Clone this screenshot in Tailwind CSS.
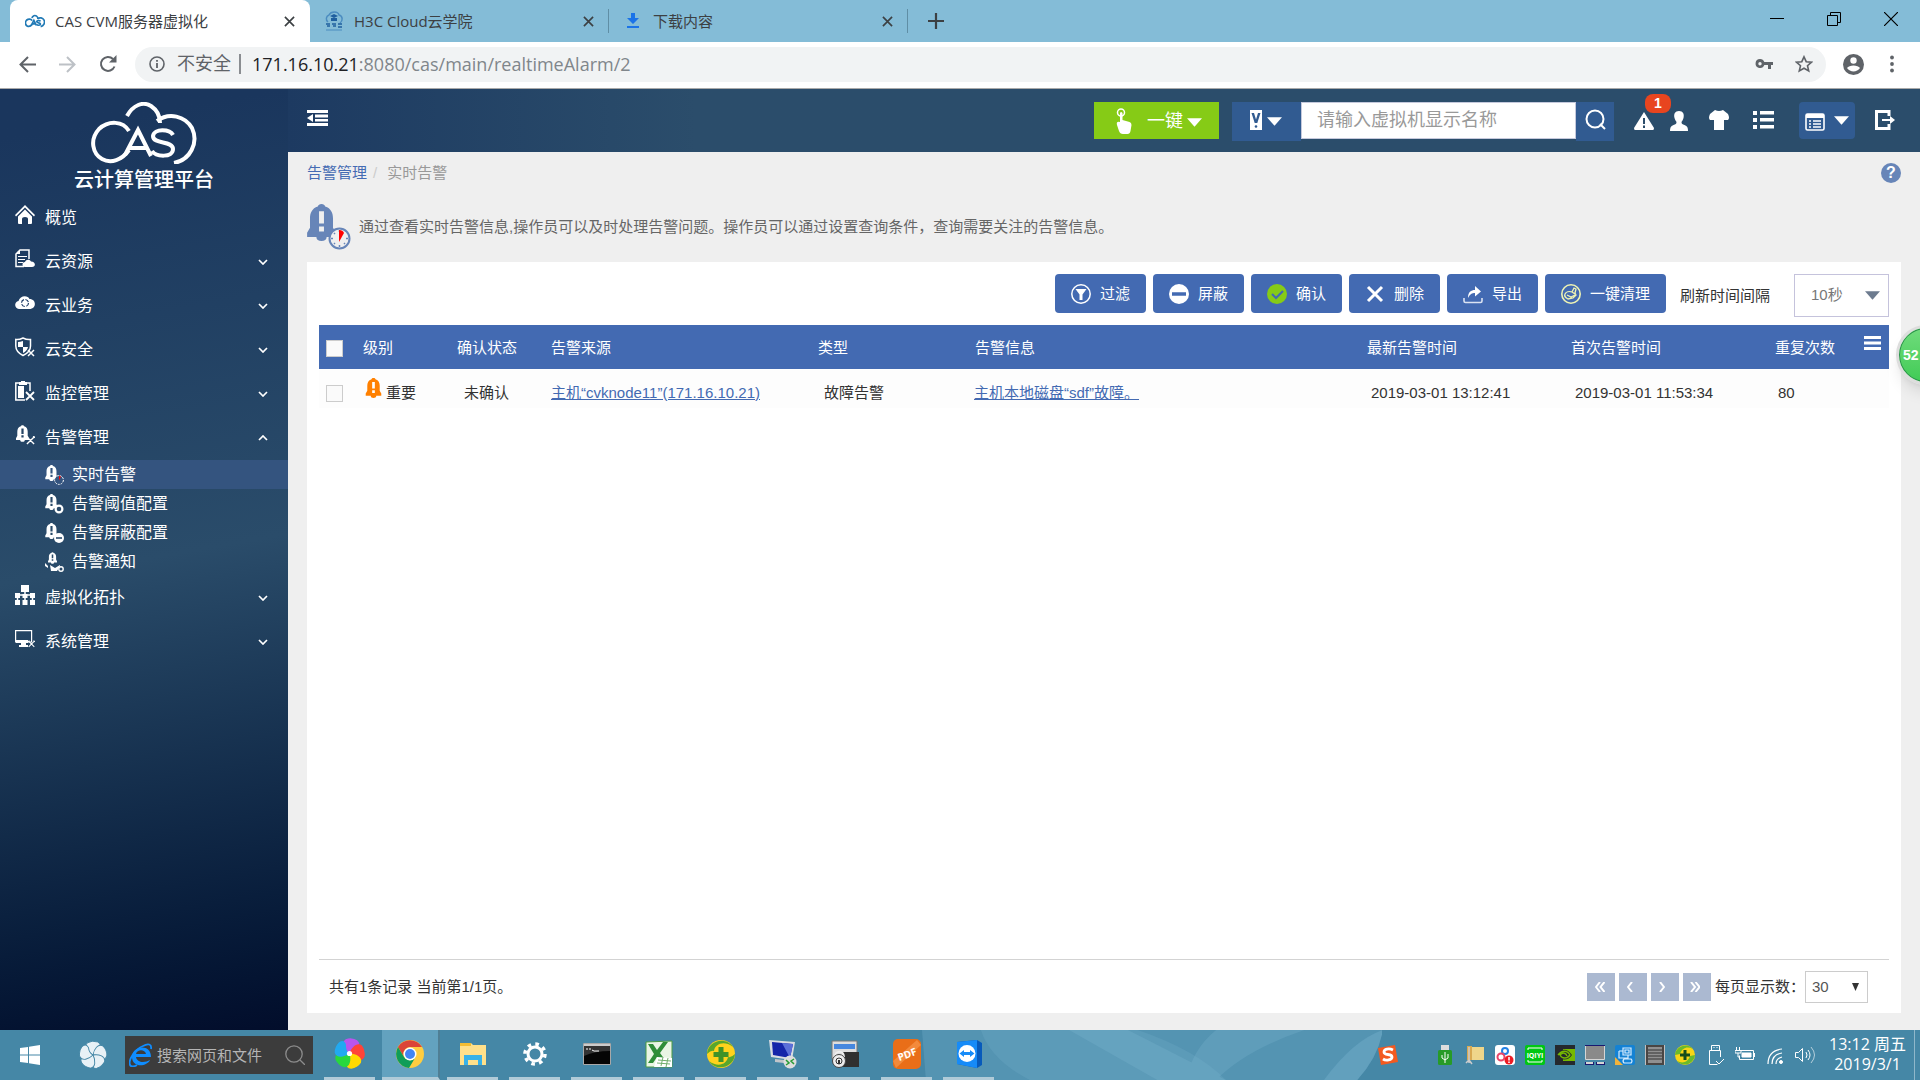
<!DOCTYPE html>
<html lang="zh-CN">
<head>
    <meta charset="UTF-8">
    <meta name="viewport" content="width=device-width, initial-scale=1.0">
    <title>CAS CVM服务器虚拟化</title>
    <script src="https://cdn.jsdelivr.net/npm/@tailwindcss/browser@4"></script>
</head>
<body class="relative flex h-screen flex-col overflow-hidden bg-[#efefef] font-['Liberation_Sans','Noto_Sans_CJK_SC',sans-serif] text-[15px] text-[#333]">
    <!-- 公用图标 -->
    <svg class="hidden">
        <symbol id="chevron" viewBox="0 0 10 6"><path d="M1 1l4 4 4-4" fill="none" stroke="currentColor" stroke-width="1.7"/></symbol>
        <symbol id="close" viewBox="0 0 12 12"><path d="M1 1l10 10M11 1L1 11" fill="none" stroke="currentColor" stroke-width="1.8"/></symbol>
        <symbol id="triangle" viewBox="0 0 16 9"><path d="M0 0h16L8 9z" fill="currentColor"/></symbol>
        <symbol id="bell" viewBox="0 0 14 18"><path fill="currentColor" fill-rule="evenodd" d="M7 0c1 0 1.600.5 1.800 1.200C11.600 2 12.600 4.500 12.600 7v4.500L14 14v2H9.500c0 1.300-1 2-2.500 2s-2.500-.7-2.500-2H0v-2l1.400-2.500V7c0-2.500 1-5 3.800-5.800C5.400.5 6 0 7 0zM5.800 3.500v6h2.400v-6zM5.800 11v2.400h2.400V11z"/></symbol>
        <symbol id="tools" viewBox="0 0 10 10"><path d="M1 1l8 8M9 1L1 9M0 2l2-2M8 0l2 2" fill="none" stroke="currentColor" stroke-width="1.500"/></symbol>
        <symbol id="cas" viewBox="0 0 106 62">
            <g fill="none" stroke="currentColor">
                <path d="M38 29C32 19 18 18 8 27-2 38 2 52 11 57c9 5 20 1 27-9"/>
                <path d="M36 14C42 3 52-1 60 4c6 4 9 10 9 17"/>
                <path d="M66 19c12-9 28-5 35 7 7 15-2 32-18 35"/>
                <path d="M34 53l13-25 13 26M39 46h17"/>
                <path d="M82 33c-3-6-19-7-20 1 0 9 20 4 20 13 0 9-17 8-21 2"/>
            </g>
        </symbol>
        <symbol id="petal" viewBox="0 0 30 30"><path d="M15 15C9 12 5 6 9 2q5-3 11-1 5 3 1 7-5 2-6 7z" fill="currentColor"/></symbol>
    </svg>

    <!-- 浏览器标签栏 -->
    <div class="flex h-[42px] shrink-0 items-center bg-[#84bcd7] pl-[10px] font-['Open_Sans','Noto_Sans_CJK_SC',sans-serif] text-[15px] text-[#3c4043]">
        <div class="flex h-full w-[300px] items-center rounded-t-lg bg-white pr-[15px] pl-[15px]">
            <svg class="h-4 w-5 stroke-[9] text-[#2079b5]"><use href="#cas"/></svg>
            <span class="ml-[10px] flex-1">CAS CVM服务器虚拟化</span>
            <button aria-label="关闭标签"><svg class="size-[11px]"><use href="#close"/></svg></button>
        </div>
        <div class="flex h-6 w-[299px] items-center border-r border-[#5f8ea5] pr-[14px] pl-[14px]">
            <svg class="size-5" viewBox="0 0 20 20"><path d="M4 11a4 4 0 0 1 1-7c2-4 9-4 10 0 4 1 4 6 1 8" fill="none" stroke="#4b8cc0" stroke-width="1.500"/><path d="M6 5l4-2 4 2-4 2zM7 7v3h6V7" fill="#1f5f9f"/><path d="M2 13h4M3 15h3M8 13h4M9 15h3M14 13h4M14 16h4" stroke="#1f5f9f" stroke-width="1.500"/><path d="M2 19h16" stroke="#4b8cc0"/></svg>
            <span class="ml-[10px] flex-1">H3C Cloud云学院</span>
            <button aria-label="关闭标签"><svg class="size-[11px]"><use href="#close"/></svg></button>
        </div>
        <div class="flex h-6 w-[299px] items-center border-r border-[#5f8ea5] pr-[14px] pl-[18px]">
            <svg class="h-4 w-3" viewBox="0 0 12 16" fill="#1a73e8"><path d="M4 0h4v5h4l-6 6-6-6h4zM0 13h12v2H0z"/></svg>
            <span class="ml-[14px] flex-1">下载内容</span>
            <button aria-label="关闭标签"><svg class="size-[11px]"><use href="#close"/></svg></button>
        </div>
        <button class="ml-5" aria-label="新建标签"><svg class="size-4" viewBox="0 0 16 16"><path d="M8 0v16M0 8h16" stroke="#3c4043" stroke-width="2.200"/></svg></button>
        <div class="ml-auto flex h-full items-center gap-[43px] pr-[22px] pb-[5px] text-black">
            <button aria-label="最小化"><svg class="size-[14px]" viewBox="0 0 14 14"><path d="M0 6.500h14" stroke="currentColor"/></svg></button>
            <button aria-label="还原"><svg class="size-[14px]" viewBox="0 0 14 14" fill="none" stroke="currentColor"><path d="M.5 3.500h10v10H.5zM3.500 3V.5h10v10H11"/></svg></button>
            <button aria-label="关闭"><svg class="size-[14px]" viewBox="0 0 14 14"><path d="M0 0l14 14M14 0L0 14" stroke="currentColor" stroke-width="1.200"/></svg></button>
        </div>
    </div>

    <!-- 地址栏 -->
    <div class="flex h-[47px] shrink-0 items-center border-b border-[#a9a9a9] bg-white pr-[26px] pb-[2px] pl-[19px] text-[#5f6368]">
        <button aria-label="后退"><svg class="size-[17px]" viewBox="0 0 17 17" fill="none" stroke="currentColor" stroke-width="2"><path d="M17 8.500H2M9 1L1.500 8.500 9 16"/></svg></button>
        <button class="ml-[23px] text-[#bdc1c6]" aria-label="前进"><svg class="size-[17px]" viewBox="0 0 17 17" fill="none" stroke="currentColor" stroke-width="2"><path d="M0 8.500h15M8 1l7.500 7.500L8 16"/></svg></button>
        <button class="ml-[23px]" aria-label="刷新"><svg class="size-[18px]" viewBox="0 0 18 18"><path d="M15.500 11.500A7 7 0 1 1 14 4" fill="none" stroke="currentColor" stroke-width="2"/><path d="M17.500 0v7.500H10z" fill="currentColor"/></svg></button>
        <div class="ml-[18px] flex h-[35px] flex-1 items-center rounded-full bg-[#f1f3f4] pr-[13px] pl-[14px]">
            <svg class="size-4" viewBox="0 0 16 16"><circle cx="8" cy="8" r="7" fill="none" stroke="currentColor" stroke-width="1.600"/><path d="M8 7v5M8 4v1.800" stroke="currentColor" stroke-width="1.800"/></svg>
            <span class="ml-3 border-r-2 border-[#8a8d91] pr-2 text-lg leading-5">不安全</span>
            <span class="ml-[11px] flex-1 font-['Open_Sans',sans-serif] text-lg text-[#80868b]"><span class="text-[#202124]">171.16.10.21</span>:8080/cas/main/realtimeAlarm/2</span>
            <svg class="h-3 w-[18px]" viewBox="0 0 18 12"><path fill="currentColor" fill-rule="evenodd" d="M5 1a4.500 4.500 0 0 1 4.300 3H18v3h-2v4h-3V7H9.300A4.500 4.500 0 1 1 5 1zm0 3a1.700 1.700 0 1 0 0 3.400A1.700 1.700 0 0 0 5 4z"/></svg>
            <svg class="ml-[22px] size-[18px]" viewBox="0 0 18 18"><path d="M9 1.800l2.200 4.900 5.300.5-4 3.500 1.200 5.200L9 13.200l-4.700 2.700 1.200-5.200-4-3.500 5.300-.5z" fill="none" stroke="currentColor" stroke-width="1.600"/></svg>
        </div>
        <svg class="ml-[17px] size-[21px]" viewBox="0 0 21 21"><circle cx="10.500" cy="10.500" r="10.500" fill="currentColor"/><circle cx="10.500" cy="6.500" r="3.200" fill="#fff"/><path d="M4 14c2-3.500 11-3.500 13 0-3 4.500-10 4.500-13 0z" fill="#fff"/></svg>
        <button class="ml-[26px]" aria-label="菜单"><svg class="h-[18px] w-1" viewBox="0 0 4 18" fill="currentColor"><circle cx="2" cy="2.500" r="1.900"/><circle cx="2" cy="9" r="1.900"/><circle cx="2" cy="15.500" r="1.900"/></svg></button>
    </div>

    <div class="flex min-h-0 flex-1">
        <!-- 左侧导航 -->
        <aside class="w-72 shrink-0 bg-linear-170 from-[#1a365d] from-5% via-[#2a4c6a] via-50% to-[#020d2b] text-base text-white">
            <div class="flex h-[107px] flex-col items-center pt-[13px]">
                <svg class="h-[62px] w-[106px] stroke-4"><use href="#cas"/></svg>
                <div class="text-xl leading-8 font-medium">云计算管理平台</div>
            </div>
            <nav>
                <a href="#" class="flex h-11 items-center pr-5 pl-[15px]">
                    <svg class="mb-[6px] size-5" viewBox="0 0 20 20" fill="currentColor"><path d="M10 0l10 10-1 1.500-9-9-9 9L0 10z"/><path d="M10 4.500l7 7V18q0 1-1 1h-3v-5q0-2-3-2t-3 2v5H4q-1 0-1-1v-6.500z"/></svg>
                    <span class="ml-[10px]">概览</span>
                </a>
                <a href="#" class="flex h-11 items-center pr-5 pl-[15px]">
                    <svg class="mb-[6px] size-5" viewBox="0 0 20 20"><path d="M9 17.500H1V5l4-4h9v9" fill="none" stroke="currentColor" stroke-width="1.500"/><path d="M1 5l4-4v4zM3 7h9v1H3zM3 10h7v1H3zM3 13h5v1H3z" fill="currentColor"/><path d="M10 18a2.500 2.500 0 0 1 0-5c1-3 5-3 6-.5 5 0 5 5.500 1 5.500z" fill="currentColor"/></svg>
                    <span class="ml-[10px] flex-1">云资源</span>
                    <svg class="mb-px h-[6px] w-[10px]"><use href="#chevron"/></svg>
                </a>
                <a href="#" class="flex h-11 items-center pr-5 pl-[15px]">
                    <svg class="mb-[6px] size-5" viewBox="0 0 20 20"><path d="M4 16c-5-.5-5-7-.5-8C5 2 13 2 14.500 6c7 0 7 9.500 1 10z" fill="currentColor"/><circle cx="10" cy="10" r="3.500" fill="none" stroke="#22406a" stroke-width="1.200" stroke-dasharray="4 1.500"/></svg>
                    <span class="ml-[10px] flex-1">云业务</span>
                    <svg class="mb-px h-[6px] w-[10px]"><use href="#chevron"/></svg>
                </a>
                <a href="#" class="flex h-11 items-center pr-5 pl-[15px]">
                    <svg class="mb-[6px] size-5" viewBox="0 0 20 20"><path d="M8 1q4 2 7.500 1.500V9c0 4-2 7-7.500 9.500C3 16 .8 13 .8 9V2.500Q4 3 8 1z" fill="none" stroke="currentColor" stroke-width="1.500"/><path d="M8 4q-3 1-5 1v5h5zM8 10v6q4-2 5-6z" fill="currentColor"/><path d="M13 13l6 6M19 13l-6 6" stroke="currentColor" stroke-width="1.500"/></svg>
                    <span class="ml-[10px] flex-1">云安全</span>
                    <svg class="mb-px h-[6px] w-[10px]"><use href="#chevron"/></svg>
                </a>
                <a href="#" class="flex h-11 items-center pr-5 pl-[15px]">
                    <svg class="mb-[6px] size-5" viewBox="0 0 20 20"><path d="M10 19H.8V2H15v8" fill="none" stroke="currentColor" stroke-width="1.500"/><path d="M4 1h2V0h4v1h2v3H4zM3 5h6v12H3z" fill="currentColor"/><path d="M11 11l8 8M19 11l-8 8" stroke="currentColor" stroke-width="1.800"/></svg>
                    <span class="ml-[10px] flex-1">监控管理</span>
                    <svg class="mb-px h-[6px] w-[10px]"><use href="#chevron"/></svg>
                </a>
                <a href="#" class="flex h-11 items-center pr-5 pl-[15px]">
                    <svg class="mb-[6px] size-5" viewBox="0 0 20 20"><use href="#bell" x="1" y="0" width="13" height="17"/><use href="#tools" x="11" y="11" width="9" height="9"/></svg>
                    <span class="ml-[10px] flex-1">告警管理</span>
                    <svg class="mb-px h-[6px] w-[10px] rotate-180"><use href="#chevron"/></svg>
                </a>
                <div>
                    <a href="#" class="flex h-[29px] items-center bg-[#34547f] pl-[45px]">
                        <svg class="size-5" viewBox="0 0 20 20"><use href="#bell" x="0" y="0" width="13" height="16"/><circle cx="14" cy="15" r="4.400" fill="#34547f" stroke="#fff" stroke-dasharray="2 1"/><path d="M14 11l2 .5-2 4z" fill="red"/></svg>
                        <span class="ml-[7px]">实时告警</span>
                    </a>
                    <a href="#" class="flex h-[29px] items-center pl-[45px]">
                        <svg class="size-5" viewBox="0 0 20 20"><use href="#bell" x="0" y="0" width="13" height="16"/><circle cx="14" cy="15" r="3.400" fill="#2a4a6a" stroke="#fff" stroke-width="2.200"/></svg>
                        <span class="ml-[7px]">告警阈值配置</span>
                    </a>
                    <a href="#" class="flex h-[29px] items-center pl-[45px]">
                        <svg class="size-5" viewBox="0 0 20 20"><use href="#bell" x="0" y="0" width="13" height="16"/><circle cx="14" cy="15" r="5" fill="#fff"/><path d="M11 15h6" stroke="#2a4a6a" stroke-width="1.600"/></svg>
                        <span class="ml-[7px]">告警屏蔽配置</span>
                    </a>
                    <a href="#" class="flex h-[29px] items-center pl-[45px]">
                        <svg class="size-5" viewBox="0 0 20 20"><use href="#bell" x="3" y="0" width="9" height="12"/><path d="M0 11l3 3v2l-3-2zM5 13l5 3 5-3v1l-3 5H6z" fill="#fff"/><circle cx="16" cy="17" r="2.200" fill="#2a4a6a" stroke="#fff" stroke-width="1.400"/></svg>
                        <span class="ml-[7px]">告警通知</span>
                    </a>
                </div>
                <a href="#" class="flex h-11 items-center pr-5 pl-[15px]">
                    <svg class="mb-[6px] size-5" viewBox="0 0 20 20"><path d="M6 0h8v7H6zM0 8h5v5H0zM7.500 9h5v4h-5zM15 8h5v5h-5zM0 15h5v5H0zM7.500 15h5v5h-5zM15 15h5v5h-5z" fill="currentColor"/><path d="M2.500 10h15M10 7v8M2.500 12v4M17.500 12v4" stroke="currentColor" stroke-width="1.500"/></svg>
                    <span class="ml-[10px] flex-1">虚拟化拓扑</span>
                    <svg class="mb-px h-[6px] w-[10px]"><use href="#chevron"/></svg>
                </a>
                <a href="#" class="flex h-11 items-center pr-5 pl-[15px]">
                    <svg class="mb-[6px] size-5" viewBox="0 0 20 20"><path d="M.6 1.600h16V13H.6z" fill="none" stroke="currentColor" stroke-width="1.200"/><path d="M1 11h12v3H1zM6 14h5v2h2v2H4v-2h2z" fill="currentColor"/><use href="#tools" x="13" y="11" width="7" height="8"/></svg>
                    <span class="ml-[10px] flex-1">系统管理</span>
                    <svg class="mb-px h-[6px] w-[10px]"><use href="#chevron"/></svg>
                </a>
            </nav>
        </aside>

        <div class="flex min-w-0 flex-1 flex-col">
            <!-- 顶部工具栏 -->
            <header class="flex h-[63px] shrink-0 items-start bg-linear-to-r from-[#1d3a61] via-[#2b4d6b] via-25% to-[#2b4d6b] pt-[13px] pr-[25px] pl-[19px] text-white">
                <button class="mt-2" aria-label="收起菜单"><svg class="h-4 w-[21px]" viewBox="0 0 21 16" fill="#fff"><path d="M0 0h21v3H0zM8 4.500h13v3H8zM8 9h13v2.500H8zM0 13h21v3H0zM6 4v8L0 8z"/></svg></button>
                <div class="flex-1"></div>
                <button class="flex h-[37px] w-[125px] items-center bg-[#86cb16] pl-[22px] text-lg">
                    <svg class="h-[26px] w-4" viewBox="0 0 16 26"><circle cx="5" cy="4.500" r="3.500" fill="none" stroke="#fff" stroke-width="1.500"/><path d="M4 5q1-2 2.500 0v7l7 2q2 .5 2 3l-1 6q-.5 3-3 3H7q-3 0-4-3l-2-6q-1-4 3-3z" fill="#fff"/></svg>
                    <span class="ml-[15px]">一键</span>
                    <svg class="mt-1 ml-1 h-[9px] w-[15px]"><use href="#triangle"/></svg>
                </button>
                <button class="ml-[13px] flex h-[39px] w-[69px] items-center bg-[#315b91] pb-1 pl-[18px]" aria-label="搜索类型">
                    <svg class="h-5 w-3" viewBox="0 0 12 20"><path d="M0 0h12v20H0z" fill="#fff"/><path d="M1.500 3h2.500l2 6.500L8 3h2.500L7.300 13H4.700z" fill="#315b91"/><circle cx="6" cy="16.500" r="1.300" fill="#315b91"/></svg>
                    <svg class="mt-1 ml-[5px] h-[9px] w-[15px]"><use href="#triangle"/></svg>
                </button>
                <input type="text" aria-label="虚拟机显示名称" placeholder="请输入虚拟机显示名称" class="h-[37px] w-[275px] border border-[#c5c9dc] bg-white pl-[15px] text-lg placeholder:text-[#999]">
                <button class="flex h-[39px] w-[38px] items-center justify-center bg-[#315b91] pb-1" aria-label="搜索"><svg class="size-[21px]" viewBox="0 0 21 21" fill="none" stroke="#fff" stroke-width="2"><circle cx="10" cy="10" r="8.500"/><path d="M15 15l5 5"/></svg></button>
                <button class="relative mt-[10px] ml-5" aria-label="告警">
                    <svg class="h-[18px] w-5" viewBox="0 0 20 18"><path d="M10 0l10 16q0 2-1 2H1q-1 0-1-2z" fill="#fff"/><path d="M10 6v6M10 13.500V16" stroke="#2b4d6b" stroke-width="2"/></svg>
                    <span class="absolute -top-[18px] left-[11px] flex h-[19px] w-[26px] items-center justify-center rounded-lg bg-[#e8451f] pb-[2px] text-sm font-bold">1</span>
                </button>
                <button class="mt-[9px] ml-4" aria-label="用户"><svg class="h-5 w-[18px]" viewBox="0 0 18 20" fill="#fff"><path d="M9 0c4 0 5.500 3 4.500 7-.5 2-1.500 3-2 4 0 2 1 2.500 3 3 3 1 3.500 3 3.500 6H0c0-3 .5-5 3.500-6 2-.5 3-1 3-3-.5-1-1.500-2-2-4C3.500 3 5 0 9 0z"/></svg></button>
                <button class="mt-2 ml-[21px]" aria-label="皮肤"><svg class="h-5 w-5" viewBox="0 0 20 20" fill="#fff"><path d="M6 0q4 2 8 0l5 4q2 4 0 6h-4v10H5V10H1q-2-2 0-6z"/></svg></button>
                <button class="mt-[9px] ml-6" aria-label="任务列表"><svg class="h-[18px] w-[21px]" viewBox="0 0 21 18" fill="#fff"><path d="M0 0h4v4H0zM7 0h14v3.500H7zM0 7h4v4H0zM7 7h14v3.500H7zM0 14h4v4H0zM7 14h14v3.500H7z"/></svg></button>
                <button class="ml-[25px] flex h-[37px] w-14 items-center rounded bg-[#315b91] pl-[6px]" aria-label="视图">
                    <svg class="mt-[3px] h-[18px] w-5" viewBox="0 0 20 18"><rect x="1" y="1" width="18" height="16" rx="1.500" fill="none" stroke="#fff" stroke-width="1.600"/><path d="M1 1h18v4H1z" fill="#fff"/><path d="M4 8h2M8 8h8M4 11h2M8 11h8M4 14h2M8 14h8" stroke="#fff" stroke-width="1.500"/></svg>
                    <svg class="ml-[9px] h-[9px] w-[15px]"><use href="#triangle"/></svg>
                </button>
                <button class="mt-2 ml-5" aria-label="退出"><svg class="h-5 w-5" viewBox="0 0 20 20"><path d="M14 6V1.500H1.500v17H14V14" fill="none" stroke="#fff" stroke-width="3"/><path d="M7 9h8V6l5 4-5 4v-3H7z" fill="#fff"/></svg></button>
            </header>

            <main class="flex min-h-0 flex-1 flex-col px-[19px] pb-[17px]">
                <div class="flex h-[42px] items-center">
                    <a href="#" class="text-[#456bb3]">告警管理</a>
                    <span class="ml-[6px] text-[#ccc]">/</span>
                    <span class="ml-[10px] flex-1 text-[#999]">实时告警</span>
                    <button aria-label="帮助" class="flex size-5 items-center justify-center rounded-full bg-[#6785b8] text-base font-bold text-white">?</button>
                </div>
                <div class="flex h-[68px] shrink-0 items-center pb-[2px]">
                    <svg class="h-[46px] w-[44px]" viewBox="0 0 44 46"><use href="#bell" x="0" y="0" width="29" height="37" class="text-[#6785b8]"/><circle cx="32.500" cy="34.500" r="10" fill="#efefef" stroke="#6785b8" stroke-width="2"/><path d="M32.500 26v2M32.500 41v2M24 34.500h2M39 34.500h2M27 40l1-1M27 29l1 1M38 40l-1-1" stroke="#6785b8" stroke-width="1.500"/><path d="M32 26q4 0 5 3l-5 9z" fill="red"/></svg>
                    <p class="ml-2 text-[#666]">通过查看实时告警信息,操作员可以及时处理告警问题。操作员可以通过设置查询条件，查询需要关注的告警信息。</p>
                </div>

                <section class="flex min-h-0 flex-1 flex-col bg-white px-3 pt-3">
                    <div class="flex h-[51px] shrink-0 items-start justify-end gap-[7px] text-white">
                        <button class="flex h-[39px] items-center gap-[9px] rounded bg-[#436ab2] px-4 pt-px">
                            <svg class="size-5" viewBox="0 0 20 20"><circle cx="10" cy="10" r="9.200" fill="none" stroke="#fff" stroke-width="1.500"/><path d="M4.500 5h11L11.500 10.500V16h-3v-5.500z" fill="#fff"/></svg>过滤
                        </button>
                        <button class="flex h-[39px] items-center gap-[9px] rounded bg-[#436ab2] px-4 pt-px">
                            <svg class="size-5" viewBox="0 0 20 20"><circle cx="10" cy="10" r="10" fill="#fff"/><path d="M3 10h14" stroke="#436ab2" stroke-width="3.500"/></svg>屏蔽
                        </button>
                        <button class="flex h-[39px] items-center gap-[9px] rounded bg-[#436ab2] px-4 pt-px">
                            <svg class="size-5" viewBox="0 0 20 20"><circle cx="10" cy="10" r="10" fill="#86cb16"/><path d="M5 10l4 4 7-7" fill="none" stroke="#436ab2" stroke-width="2.200"/></svg>确认
                        </button>
                        <button class="flex h-[39px] items-center gap-[9px] rounded bg-[#436ab2] px-4 pt-px">
                            <svg class="size-5" viewBox="0 0 20 20"><path d="M3 3l14 14M17 3L3 17" stroke="#fff" stroke-width="3"/></svg>删除
                        </button>
                        <button class="flex h-[39px] items-center gap-[9px] rounded bg-[#436ab2] px-4 pt-px">
                            <svg class="size-5" viewBox="0 0 20 20"><path d="M1 14v3q0 1.500 1.500 1.500h15q1.500 0 1.500-1.500v-3" fill="none" stroke="#dbe3f2" stroke-width="1.600"/><path d="M5 14c0-6 3-8 7-8V2l6 5.500-6 5V9C9 9 7 10 5 14z" fill="#fff"/></svg>导出
                        </button>
                        <button class="flex h-[39px] items-center gap-[9px] rounded bg-[#436ab2] px-4 pt-px">
                            <svg class="size-5" viewBox="0 0 20 20" fill="none" stroke="#eef3b4"><circle cx="10" cy="10" r="9.200" stroke-width="1.600"/><path d="M4 10c1-2 4-3 7-2l2-4 2 1-1 4 1 2-3 3-5 1c-2-1-4-3-3-5zM6 11l4 2 4-2M11 8l3 2" stroke-width="1.300"/></svg>一键清理
                        </button>
                        <label for="interval" class="ml-[7px] leading-[43px] text-[#333]">刷新时间间隔</label>
                        <div class="relative ml-[17px]">
                            <select id="interval" class="h-[43px] w-[95px] appearance-none border border-[#c5c3dc] bg-white pl-4 text-[#777]"><option>10秒</option></select>
                            <svg class="pointer-events-none absolute top-[17px] right-[9px] h-[9px] w-[15px] text-[#6d7b8f]"><use href="#triangle"/></svg>
                        </div>
                    </div>

                    <div class="flex-1 border-b border-[#d3d3d3]">
                        <table class="w-full table-fixed text-left">
                            <colgroup>
                                <col class="w-9"><col class="w-[94px]"><col class="w-[94px]"><col class="w-[267px]"><col class="w-[157px]"><col><col class="w-[204px]"><col class="w-[203px]"><col class="w-[78px]"><col class="w-[45px]">
                            </colgroup>
                            <thead>
                                <tr class="h-11 bg-[#436ab2] text-white">
                                    <th class="pl-[7px]"><input type="checkbox" aria-label="全选" class="mt-[3px] block size-[17px] appearance-none border border-[#ccc] bg-[#fafafa]"></th>
                                    <th class="pt-[2px] pl-2 font-normal">级别</th>
                                    <th class="pt-[2px] pl-2 font-normal">确认状态</th>
                                    <th class="pt-[2px] pl-2 font-normal">告警来源</th>
                                    <th class="pt-[2px] pl-2 font-normal">类型</th>
                                    <th class="pt-[2px] pl-2 font-normal">告警信息</th>
                                    <th class="pt-[2px] pl-2 font-normal">最新告警时间</th>
                                    <th class="pt-[2px] pl-2 font-normal">首次告警时间</th>
                                    <th class="pt-[2px] pl-[9px] font-normal whitespace-nowrap">重复次数</th>
                                    <th class="pl-5"><button aria-label="列设置" class="block pb-2"><svg class="h-[14px] w-[17px]" viewBox="0 0 17 14"><path d="M0 1.500h17M0 7h17M0 12.500h17" stroke="#fff" stroke-width="2.800"/></svg></button></th>
                                </tr>
                            </thead>
                            <tbody>
                                <tr class="h-[39px] border-t border-white bg-[#fdfdfd]">
                                    <td class="pt-[9px] pl-[7px]"><input type="checkbox" aria-label="选择告警" class="block size-[17px] appearance-none border border-[#ccc] bg-[#fafafa]"></td>
                                    <td class="pt-2 pl-[10px]"><div class="flex items-center"><svg class="mb-[9px] h-5 w-[17px] text-[#ff8000]"><use href="#bell"/></svg><span class="ml-1">重要</span></div></td>
                                    <td class="pt-2 pl-[15px]">未确认</td>
                                    <td class="pt-2 pl-2"><a href="#" class="text-[#436ab2] underline">主机“cvknode11”(171.16.10.21)</a></td>
                                    <td class="pt-2 pl-[14px]">故障告警</td>
                                    <td class="pt-2 pl-[7px]"><a href="#" class="text-[#436ab2] underline">主机本地磁盘“sdf”故障。</a></td>
                                    <td class="pt-2 pl-3">2019-03-01 13:12:41</td>
                                    <td class="pt-2 pl-3">2019-03-01 11:53:34</td>
                                    <td class="pt-2 pl-3">80</td>
                                    <td></td>
                                </tr>
                            </tbody>
                        </table>
                    </div>

                    <div class="flex h-[53px] shrink-0 items-center pt-px pr-[21px] pl-[10px]">
                        <span class="flex-1">共有1条记录 当前第1/1页。</span>
                        <div class="flex gap-1 text-white">
                            <button aria-label="首页" class="flex size-7 items-center justify-center bg-[#abb9d1] pr-[2px]"><svg class="size-[10px]" viewBox="0 0 10 10" fill="none" stroke="currentColor" stroke-width="2"><path d="M5 0L1 5l4 5M9.500 0l-4 5 4 5"/></svg></button>
                            <button aria-label="上一页" class="flex size-7 items-center justify-center bg-[#abb9d1] pr-[6px]"><svg class="h-[10px] w-[6px]" viewBox="0 0 6 10" fill="none" stroke="currentColor" stroke-width="2"><path d="M5 0L1 5l4 5"/></svg></button>
                            <button aria-label="下一页" class="flex size-7 items-center justify-center bg-[#abb9d1] pr-[6px]"><svg class="h-[10px] w-[6px]" viewBox="0 0 6 10" fill="none" stroke="currentColor" stroke-width="2"><path d="M1 0l4 5-4 5"/></svg></button>
                            <button aria-label="末页" class="flex size-7 items-center justify-center bg-[#abb9d1] pr-1"><svg class="size-[10px]" viewBox="0 0 10 10" fill="none" stroke="currentColor" stroke-width="2"><path d="M1 0l4 5-4 5M5.500 0l4 5-4 5"/></svg></button>
                        </div>
                        <label for="pagesize" class="ml-1">每页显示数：</label>
                        <div class="relative">
                            <select id="pagesize" class="block h-8 w-[63px] appearance-none border border-[#ccc] bg-white pl-[6px] text-[#555]"><option>30</option></select>
                            <svg class="pointer-events-none absolute top-3 right-[9px] h-[8px] w-[7px] text-[#333]" viewBox="0 0 7 8"><path d="M0 0h7L3.500 8z" fill="currentColor"/></svg>
                        </div>
                    </div>
                </section>
            </main>
        </div>
    </div>

    <!-- 悬浮加速球 -->
    <div class="absolute top-[325px] -right-9 flex size-[60px] items-center rounded-full border-[3px] border-[#ddd] bg-linear-to-b from-[#6fdc7c] to-[#3fcb55] pl-1 text-sm font-bold text-white shadow-lg inset-ring-1 inset-ring-[#2a8f4a]">52</div>

    <!-- 系统任务栏 -->
    <footer class="relative flex h-[50px] shrink-0 items-center bg-[#4587a6] pl-5 font-['Open_Sans','Noto_Sans_CJK_SC',sans-serif] text-white">
        <svg class="absolute inset-y-0 right-[28%] left-[48%] h-full w-[24%]" viewBox="0 0 470 50" preserveAspectRatio="none" fill="#8cc3de">
            <path d="M0 0h470q-4 26-26 50H4z" opacity=".22"/>
            <path d="M60 0h160q60 20 90 50H110Q70 30 60 0z" opacity=".15"/>
            <path d="M150 0h60l100 50h-70zM300 0h90q-60 20-90 50h-30q5-30 30-50z" opacity=".2"/>
            <path d="M470 0q-30 10-60 50h34q22-24 26-50z" opacity=".25"/>
        </svg>
        <button class="relative" aria-label="开始"><svg class="size-5" viewBox="0 0 20 20" fill="#fff"><path d="M0 3l8-1v7.500H0zM9 1.800L20 0v9.500H9zM0 10.500h8V18l-8-1zM9 10.500h11V20L9 18.200z"/></svg></button>
        <button class="relative ml-[39px]" aria-label="浏览器">
            <svg class="size-7 text-[#e8f1f6]" viewBox="0 0 30 30" stroke="#4587a6" stroke-width="1">
                <use href="#petal"/><use href="#petal" transform="rotate(72 15 15)"/><use href="#petal" transform="rotate(144 15 15)"/><use href="#petal" transform="rotate(216 15 15)"/><use href="#petal" transform="rotate(288 15 15)"/>
            </svg>
        </button>
        <div class="relative ml-[18px] flex h-[38px] w-[188px] items-center bg-[#3c3c3c] pr-2 pl-1">
            <svg class="size-6" viewBox="0 0 24 24"><path d="M22 14H7c1 6 9 6 14 3-3 7-18 8-18-3C3 3 22 0 22 14zM7 11h10c-1-5-9-5-10 0z" fill="#0f8dff" fill-rule="evenodd"/><path d="M22 6c1-5-3-6-8-3C6 6-1 17 1 22c1 2 4 2 7 0" fill="none" stroke="#0f8dff" stroke-width="1.800"/></svg>
            <input type="text" aria-label="搜索" placeholder="搜索网页和文件" class="ml-1 w-0 flex-1 bg-transparent text-[15px] placeholder:text-[#b5b5b5]">
            <svg class="size-5" viewBox="0 0 20 20" fill="none" stroke="#8c8c8c" stroke-width="1.300"><circle cx="9" cy="9" r="8.200"/><path d="M15 15l5 5"/></svg>
        </div>
        <div class="relative ml-[11px] flex h-full items-stretch gap-[11px]">
            <button aria-label="极速浏览器" class="flex w-[51px] items-center justify-center border-b-[3px] border-[#b0cbd8]">
                <svg class="size-[31px]" viewBox="0 0 30 30">
                    <use href="#petal" class="text-[#b955ee]" transform="rotate(10 15 15)"/><use href="#petal" class="text-[#ff4338]" transform="rotate(82 15 15)"/><use href="#petal" class="text-[#ffd900]" transform="rotate(154 15 15)"/><use href="#petal" class="text-[#28d83d]" transform="rotate(226 15 15)"/><use href="#petal" class="text-[#22a9f0]" transform="rotate(298 15 15)"/>
                    <circle cx="15" cy="15" r="2.500" fill="#fff"/>
                </svg>
            </button>
            <button aria-label="Chrome" class="-mx-[4px] flex w-[58px] items-center justify-center border-r-2 border-b-[3px] border-r-[#4f7f95] border-b-[#b0cbd8] bg-[#63a2bf]"><svg class="size-7" viewBox="0 0 28 28"><circle cx="14" cy="14" r="14" fill="#ffcd40"/><path d="M2 7a14 14 0 0 1 24 0H14a7 7 0 0 0-6 10z" fill="#db4437"/><path d="M2 7a14 14 0 0 0 11 21l6-10a7 7 0 0 1-11-1z" fill="#0f9d58"/><circle cx="14" cy="14" r="6.500" fill="#fff"/><circle cx="14" cy="14" r="5" fill="#4285f4"/></svg></button>
            <button aria-label="资源管理器" class="flex w-[51px] items-center justify-center border-b-[3px] border-[#b0cbd8]"><svg class="h-6 w-7" viewBox="0 0 28 24"><path d="M1 1h11l2 2h13v20H1z" fill="#ffe08a"/><path d="M1 1h11v3H1z" fill="#f3bd33"/><path d="M5 23V13h18v10h-4v-5h-10v5z" fill="#38b2e8"/></svg></button>
            <button aria-label="设置" class="flex w-[51px] items-center justify-center border-b-[3px] border-[#b0cbd8]"><svg class="size-6" viewBox="0 0 24 24" fill="none" stroke="#fff"><circle cx="12" cy="12" r="7" stroke-width="3"/><circle cx="12" cy="12" r="10" stroke-width="3.500" stroke-dasharray="3.600 4.254"/></svg></button>
            <button aria-label="命令提示符" class="flex w-[51px] items-center justify-center border-b-[3px] border-[#b0cbd8]"><svg class="h-[22px] w-7" viewBox="0 0 28 22"><path d="M.5.5h27v21H.5z" fill="#050505" stroke="#a8a8a8"/><path d="M1 1h26v2H1z" fill="#ccc"/><path d="M1 3h26v5Q12 8 1 13z" fill="#333"/><path d="M3 6h2M6 6h2M9 7l2 1h5" stroke="#fff"/></svg></button>
            <button aria-label="Excel" class="flex w-[51px] items-center justify-center border-b-[3px] border-[#b0cbd8]"><svg class="size-7" viewBox="0 0 28 28"><path d="M1 2l26-1v26H1z" fill="#e9f5e4" stroke="#4a9b45"/><path d="M3 4h5l4 6 6-8h5l-8 11 8 11h-6l-5-7-4 6H3l6-9z" fill="#2f8d38"/><path d="M12 17l15 1v9H9z" fill="#fff"/><path d="M13 20l13 1M12 23l13 1M18 17l-2 9M23 18l-2 9" stroke="#72af6d"/></svg></button>
            <button aria-label="安全卫士" class="flex w-[51px] items-center justify-center border-b-[3px] border-[#b0cbd8]"><svg class="size-[30px]" viewBox="0 0 30 30"><circle cx="15" cy="15" r="14" fill="#ffd21c"/><path d="M1 15C2 1 20-3 27 8 18 1 9 5 8 12q-3-1-7 3zM29 15c-1 14-19 18-26 7 9 7 18 3 19-4q3 1 7-3z" fill="#58a62d"/><path d="M12.500 8h5v5h5v5h-5v5h-5v-5h-5v-5h5z" fill="#3f9228"/></svg></button>
            <button aria-label="远程桌面" class="flex w-[51px] items-center justify-center border-b-[3px] border-[#b0cbd8]"><svg class="size-[30px]" viewBox="0 0 30 30"><path d="M1 1l26 2-3 18L3 18z" fill="#d8dce2"/><path d="M4 3l21 2-3 14L5 16z" fill="#1525a9"/><path d="M14 4l11 1-3 14z" fill="#5b70d9"/><path d="M7 20l9 1v3l-9-1z" fill="#c1c5ca"/><circle cx="22" cy="23" r="6.500" fill="#ddd"/><path d="M18 21l3 3-3 2M26 20l-3 2 3 3" fill="none" stroke="#289b35" stroke-width="1.500"/></svg></button>
            <button aria-label="SSH 终端" class="flex w-[51px] items-center justify-center border-b-[3px] border-[#b0cbd8]"><svg class="size-7" viewBox="0 0 28 28"><path d="M1 1h25v18H1z" fill="#ddd" stroke="#777"/><path d="M3 4h21v5H3z" fill="#4787de"/><path d="M12 12h16v15H12z" fill="#303030"/><path d="M4 17c0-7 9-7 9 0" fill="none" stroke="#eee" stroke-width="2"/><circle cx="8" cy="21" r="6.500" fill="#eee" stroke="#444"/><circle cx="8" cy="21" r="3" fill="none" stroke="#333"/><path d="M8 20v4" stroke="#333" stroke-width="2"/></svg></button>
            <button aria-label="PDF 阅读器" class="flex w-[51px] items-center justify-center border-b-[3px] border-[#b0cbd8]"><svg class="size-[30px] overflow-visible" viewBox="0 0 30 30"><rect x="1" width="28" height="30" rx="5" fill="#e96e18"/><path d="M1 22L25 1l4 5L4 29z" fill="#f38a3b"/><text x="15" y="19" text-anchor="middle" transform="rotate(-20 15 15)" font-size="10" font-weight="bold" fill="#fff">PDF</text></svg></button>
            <button aria-label="TeamViewer" class="flex w-[51px] items-center justify-center border-b-[3px] border-[#b0cbd8]"><svg class="size-[28px]" viewBox="0 0 28 28"><path d="M2 2l20-2 5 3v22l-5 3-20-4z" fill="#075abb"/><path d="M2 2l20-2v28L2 24z" fill="#168bf8"/><circle cx="12" cy="13.500" r="8.500" fill="#fff"/><path d="M4.500 13.500L9 10v2h6v-2l4.500 3.500L15 17v-2H9v2z" fill="#168bf8"/></svg></button>
        </div>

        <div class="ml-auto flex items-center gap-[10px] pr-2">
            <svg class="mr-[27px] size-5" viewBox="0 0 20 20"><path d="M0 3l17-3 3 17-17 3z" fill="#f35a20"/><path d="M15 5c-4-2-9-1-9 2 0 4 8 1 8 5 0 3-6 4-9 2" fill="none" stroke="#fff" stroke-width="2.800"/></svg>
            <svg class="size-5" viewBox="0 0 20 20"><path d="M6 0h8v6H6z" fill="#ddd"/><rect x="3" y="5" width="14" height="15" rx="1.500" fill="#279b27"/><path d="M10 7v11M7 10v3l3 2M13 9v4l-3 2" fill="none" stroke="#fff"/></svg>
            <svg class="size-5" viewBox="0 0 20 20"><path d="M5 2h14v13H5z" fill="#efd68a"/><path d="M2 1h5v14H2z" fill="#d8a951"/><path d="M4 2v16M1 18l3-3 3 4" fill="none" stroke="#ccc" stroke-width="1.500"/></svg>
            <svg class="size-5" viewBox="0 0 20 20"><rect width="20" height="20" rx="3" fill="#fff"/><circle cx="10" cy="6" r="3" fill="none" stroke="#2382e4" stroke-width="2"/><circle cx="6" cy="12" r="3.500" fill="none" stroke="#e84569" stroke-width="2"/><circle cx="14" cy="15" r="4.500" fill="#ed1c24"/><path d="M14 12v3.500M14 16.500V18" stroke="#fff" stroke-width="1.500"/></svg>
            <svg class="size-5" viewBox="0 0 20 20"><rect width="20" height="20" rx="2" fill="#00c713"/><path d="M3 5V3h14v2M3 15v2h14v-2" fill="none" stroke="#fff"/><text x="10" y="13" text-anchor="middle" font-size="7" font-weight="bold" fill="#fff">iQIYI</text></svg>
            <svg class="size-5" viewBox="0 0 20 20"><path d="M0 0h20v20H0z" fill="#25292d"/><path d="M8 4h12v12H8z" fill="#76b900"/><path d="M1 10c5-7 11-7 16 0-4 6-11 6-16 0z" fill="#25292d"/><path d="M3 10c4-5 9-5 12 0-3 4-8 4-10 0 3-3 6-2 7 1" fill="none" stroke="#76b900" stroke-width="1.300"/></svg>
            <svg class="size-5" viewBox="0 0 20 20"><path d="M.5.500h19v14H.5z" fill="#8a8a8a" stroke="#d5d5d5"/><path d="M0 0h20v1H0zM0 17h9v3H0zM11 17h9v3h-9z" fill="#191970"/><path d="M1 17h7v2H1zM12 17h7v2h-7z" fill="#d5d5d5"/></svg>
            <svg class="size-5" viewBox="0 0 20 20"><rect width="20" height="20" rx="2" fill="#1482d4"/><path d="M0 12l8 8H0z" fill="#f2b33b"/><path d="M8 3h8v7H8zM4 6h4M4 6v7h9v-3M10 5h4v3h-4zM9 14h7q2 2 0 4H9q-2-2 0-4z" fill="none" stroke="#d6edff" stroke-width="1.200"/></svg>
            <svg class="size-5" viewBox="0 0 20 20"><path d="M0 0h20v20H0z" fill="#4a4644"/><path d="M3 2h14v16H3z" fill="#909090"/><path d="M3 5h14M3 8h14M3 11h14M3 14h14" stroke="#333"/><path d="M.5 0v20M19.500 0v20" stroke="#c0c0c0"/></svg>
            <svg class="size-5" viewBox="0 0 20 20"><circle cx="10" cy="10" r="10" fill="#f8d516"/><path d="M0 10C1 1 12-3 18 4 12 1 7 3 5 9zM20 10c-1 9-12 13-18 6 6 3 11 1 13-5z" fill="#6aba2b"/><path d="M8.500 5h3v3.500H15v3h-3.500V15h-3v-3.500H5v-3h3.500z" fill="#154d1c"/></svg>
            <svg class="size-5" viewBox="0 0 20 20" fill="none" stroke="#fff"><path d="M6.500 5V.5h8V5M4.500 5.500h11V12M4.500 5.500v14h8M9 2v1M12 2v1M11 16l3 3 5-5"/></svg>
            <svg class="size-5" viewBox="0 0 20 20" fill="none" stroke="#fff"><path d="M4.500 5.500h14v9h-14v-4M1.500 2v3M4.500 2v3M0 5.500h6V8H0zM3 8v4h2M19.500 8v4"/><path d="M7 8h9v4H7z" fill="#fff"/></svg>
            <svg class="size-5" viewBox="0 0 20 20" fill="none" stroke="#fff"><path d="M3 19C3 10 8 5 17 4M7 19c0-6 3-10 10-11M11 19c0-4 2-6 6-7" stroke-width="1.200"/><circle cx="16" cy="17" r="1.500" fill="#fff"/></svg>
            <svg class="size-5" viewBox="0 0 20 20" fill="none" stroke="#fff"><path d="M.5 7.500h3l4-4v13l-4-4h-3zM11 7q2 3 0 6M13 5q4 5 0 10"/><path d="M16 2q7 8 0 16" opacity=".6"/></svg>
            <div class="ml-1 pb-[2px] text-center text-base leading-5 whitespace-nowrap">
                <div>13:12 周五</div>
                <div>2019/3/1</div>
            </div>
        </div>
        <div class="h-full w-[6px] border-l border-[#8fb7ca]"></div>
    </footer>
</body>
</html>
